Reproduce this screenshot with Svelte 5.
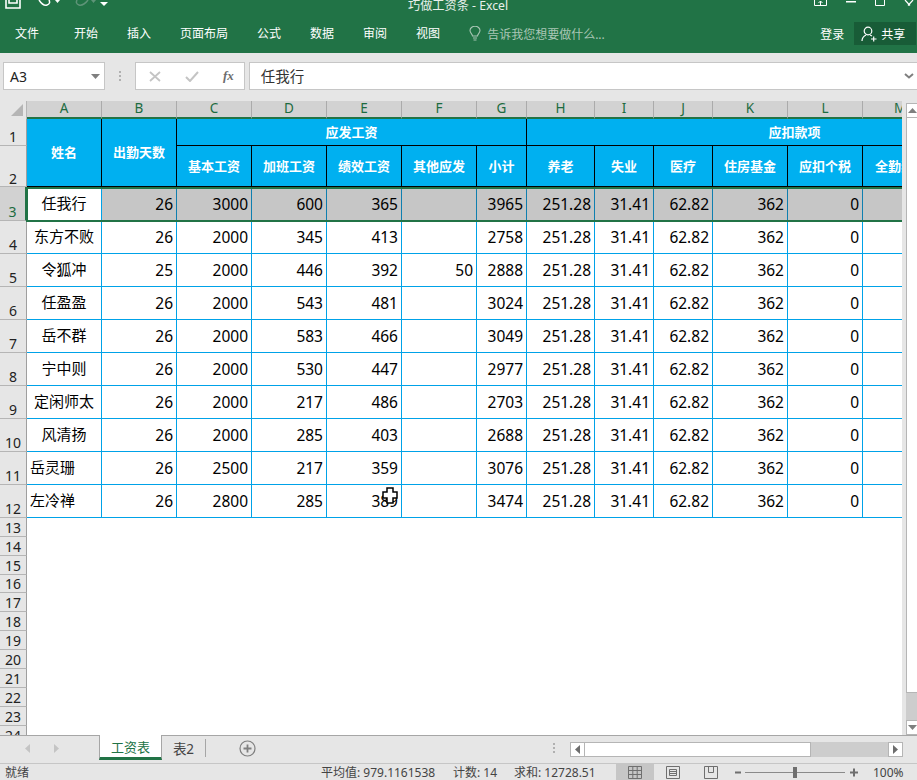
<script>
  const cols = ['A','B','C','D','E','F','G','H','I','J','K','L','M'];
  const rows = [
    ['任我行',26,3000,600,365,'',3965],
    ['东方不败',26,2000,345,413,'',2758],
    ['令狐冲',25,2000,446,392,50,2888],
    ['任盈盈',26,2000,543,481,'',3024],
    ['岳不群',26,2000,583,466,'',3049],
    ['宁中则',26,2000,530,447,'',2977],
    ['定闲师太',26,2000,217,486,'',2703],
    ['风清扬',26,2000,285,403,'',2688],
    ['岳灵珊',26,2500,217,359,'',3076],
    ['左冷禅',26,2800,285,389,'',3474]
  ];
  const deduct = ['251.28','31.41','62.82',362,0];
  const tabs = ['开始','插入','页面布局','公式','数据','审阅','视图'];
  const sub = ['基本工资','加班工资','绩效工资','其他应发','小计','养老','失业','医疗','住房基金','应扣个税','全勤奖'];
  const blank = Array.from({length: 12}, (_, i) => i + 13);
</script>

<div class="app">
  <header class="title">
    <div class="qat">
      <svg width="16" height="9" viewBox="0 0 16 9"><path d="M1 0v8h14V0M4 0v3h8V0" fill="none" stroke="#fff" stroke-width="1.6"/></svg>
      <svg class="undo" width="22" height="9" viewBox="0 0 22 9"><path d="M1 0c2 3 5 6 8 5s3-3 2-5" fill="none" stroke="#fff" stroke-width="1.5"/><path d="M17 0h5l-2.500 3z" fill="#fff"/></svg>
      <svg class="redo" width="24" height="9" viewBox="0 0 24 9"><path d="M15 0c-2 3-6 6-9 5S3 2 4 0" fill="none" stroke="#5e9478" stroke-width="1.500"/><path d="M18 0h5l-2.500 3z" fill="#5e9478"/></svg>
      <svg class="more" width="8" height="6" viewBox="0 0 8 6"><path d="M1 0h6M0 2h8l-4 4z" fill="#fff" stroke="none"/></svg>
    </div>
    <div class="doc">巧做工资条 - Excel</div>
    <div class="win">
      <svg width="13" height="7" viewBox="0 0 13 7"><path d="M.5 0v5.500h12V0M6.500 5V1M4.500 3l2-2 2 2" fill="none" stroke="#fff"/></svg>
      <svg width="10" height="4" viewBox="0 0 10 4"><rect y="1" width="10" height="1.500" fill="#fff"/></svg>
      <svg width="10" height="6" viewBox="0 0 10 6"><path d="M.5 0v5.500h9V0" fill="none" stroke="#fff"/></svg>
      <svg width="10" height="6" viewBox="0 0 10 6"><path d="M1 0l5 5.500M9 0L4 5.500" fill="none" stroke="#fff" stroke-width="1.200"/></svg>
    </div>
  </header>

  <nav class="ribbon">
    <span class="file">文件</span>
    {#each tabs as t}<span class="tab">{t}</span>{/each}
    <span class="tell">
      <svg width="12" height="15" viewBox="0 0 12 15"><path d="M3.500 10c0-2-2.500-3-2.500-5.500a5 4.300 0 0 1 10 0C11 7 8.500 8 8.500 10zM4 12h4M4.500 14h3" fill="none" stroke="#a9c6b5" stroke-width="1.100"/></svg>
      告诉我您想要做什么...
    </span>
    <span class="login">登录</span>
    <span class="share">
      <svg width="16" height="16" viewBox="0 0 16 16"><circle cx="7" cy="5" r="3.800" fill="none" stroke="#fff" stroke-width="1.200"/><path d="M1 15c0-3 2-5 4-6M9 9l2 1M10 13h5.500M12.700 10.500v5" fill="none" stroke="#fff" stroke-width="1.200"/></svg>
      共享
    </span>
  </nav>

  <section class="formula">
    <div class="namebox">A3<svg width="9" height="5" viewBox="0 0 9 5"><path d="M0 0h9L4.500 5z" fill="#7f7f7f"/></svg></div>
    <div class="dots"><i></i><i></i><i></i></div>
    <div class="fx">
      <svg width="12" height="11" viewBox="0 0 12 11"><path d="M1 1l10 9M11 1L1 10" stroke="#c4c4c4" stroke-width="1.800" fill="none"/></svg>
      <svg width="14" height="11" viewBox="0 0 14 11"><path d="M1 6l4 4 8-9" stroke="#c4c4c4" stroke-width="2" fill="none"/></svg>
      <span class="fxt">fx</span>
    </div>
    <div class="input"><span class="ftext">任我行</span><svg width="10" height="6" viewBox="0 0 10 6"><path d="M1 1l4 3.500L9 1" stroke="#7f7f7f" stroke-width="2" fill="none"/></svg></div>
  </section>

  <main class="work">
    <div class="viewport">
      <div class="grid">
        <div class="corner"><svg width="12" height="12" viewBox="0 0 12 12"><path d="M12 0v12H0z" fill="#b5b5b5"/></svg></div>
        {#each cols as c}<div class="ch">{c}</div>{/each}
        <div class="ch"></div>

        <div class="rh">1</div>
        <div class="hd name">姓名</div>
        <div class="hd days">出勤天数</div>
        <div class="hd pay">应发工资</div>
        <div class="hd ded">应扣款项</div>

        <div class="rh r2">2</div>
        {#each sub as s, i}<div class="hd" class:wide={i === 10}>{s}</div>{/each}

        {#each rows as r, i}
          <div class="rh" class:on={i === 0}>{i + 3}</div>
          <div class="c name-cell" class:sel-a={i === 0} class:left={i >= 8}>{r[0]}{#if i === 0}<div class="selection"></div>{/if}</div>
          {#each r.slice(1) as v, j}
            <div class="c" class:sel={i === 0}>{v}{#if i === 9 && j === 3}<svg class="cursor" width="16" height="17" viewBox="0 0 16 17"><path d="M5 1h6v4h4v6h-4v5H5v-5H1V5h4z" fill="#fff" stroke="#000" stroke-width="1.500"/></svg>{/if}</div>
          {/each}
          {#each deduct as v}<div class="c" class:sel={i === 0}>{v}</div>{/each}
          <div class="c" class:sel={i === 0}></div>
          <div class="c nb" class:sel={i === 0}></div>
        {/each}

        {#each blank as n}<div class="rh plain">{n}</div>{/each}
      </div>
    </div>
    <aside class="vscroll">
      <div class="sbtn"><svg width="9" height="5" viewBox="0 0 9 5"><path d="M0 5h9L4.500 0z" fill="#7f7f7f"/></svg></div>
      <div class="vthumb"></div>
      <div class="vtrack"></div>
      <div class="sbtn"><svg width="9" height="5" viewBox="0 0 9 5"><path d="M0 0h9L4.500 5z" fill="#7f7f7f"/></svg></div>
    </aside>
  </main>

  <section class="sheets">
    <div class="nav">
      <svg width="5" height="9" viewBox="0 0 5 9"><path d="M5 0v9L0 4.500z" fill="#c4c4c4"/></svg>
      <svg width="5" height="9" viewBox="0 0 5 9"><path d="M0 0v9l5-4.500z" fill="#c4c4c4"/></svg>
    </div>
    <div class="active">工资表</div>
    <div class="sheet2">表2</div>
    <div class="plus"><svg width="17" height="17" viewBox="0 0 17 17"><circle cx="8.500" cy="8.500" r="7.500" fill="none" stroke="#7f7f7f" stroke-width="1.200"/><path d="M8.500 4.500v8M4.500 8.500h8" stroke="#7f7f7f" stroke-width="1.800"/></svg></div>
    <div class="dots small"><i></i><i></i><i></i></div>
    <div class="hscroll">
      <div class="hbtn"><svg width="5" height="9" viewBox="0 0 5 9"><path d="M5 0v9L0 4.500z" fill="#6d6d6d"/></svg></div>
      <div class="hthumb"></div>
      <div class="htrack"></div>
      <div class="hbtn"><svg width="5" height="9" viewBox="0 0 5 9"><path d="M0 0v9l5-4.500z" fill="#6d6d6d"/></svg></div>
    </div>
  </section>

  <footer class="status">
    <span class="ready">就绪</span>
    <span class="avg">平均值: 979.1161538</span>
    <span class="count">计数: 14</span>
    <span class="sum">求和: 12728.51</span>
    <span class="view current"><svg width="14" height="13" viewBox="0 0 14 13"><path d="M.5.500h13v12H.5zM.5 4.500h13M.5 8.500h13M4.800.500v12M9.200.500v12" fill="none" stroke="#6f6f6f"/></svg></span>
    <span class="view"><svg width="14" height="13" viewBox="0 0 14 13"><path d="M.5.500h13v12H.5zM3.500 3.500h7v6h-7zM3.500 5.500h7M3.500 7.500h7" fill="none" stroke="#6f6f6f"/></svg></span>
    <span class="view"><svg width="14" height="13" viewBox="0 0 14 13"><path d="M.5.500h13v12H.5zM4.500.500v6h5v-6" fill="none" stroke="#6f6f6f"/></svg></span>
    <span class="zoom">
      <svg width="115" height="13" viewBox="0 0 115 13"><path d="M10 6.500h100" stroke="#8a8a8a" stroke-width="1"/><path d="M0 6.500h6" stroke="#6f6f6f" stroke-width="2"/><rect x="58" y="1" width="4" height="11" fill="#6f6f6f"/></svg>
      <svg width="8" height="9" viewBox="0 0 8 9"><path d="M0 4.500h8M4 .500v8" stroke="#6f6f6f" stroke-width="2"/></svg>
    </span>
    <span class="pct">100%</span>
  </footer>
</div>

<style>
  :global(body) { margin: 0; }
  .app {
    width: 917px; height: 780px; overflow: hidden; display: flex; flex-direction: column;
    font-family: "Noto Sans", "Noto Sans CJK SC", sans-serif; background: #e6e6e6;
  }
  svg { display: block; flex: none; }

  .title {
    height: 15px; flex: none; background: #217346; color: #e8f0eb; display: flex; overflow: hidden;
  }
  .qat { display: flex; align-items: flex-start; padding-left: 5px; width: 300px; flex: none; box-sizing: border-box; }
  .undo { margin-left: 17px; }
  .redo { margin-left: 13px; }
  .more { margin-left: 3px; }
  .doc { width: 200px; margin-left: 108px; font-size: 12.200px; line-height: 12px; height: 13px; white-space: nowrap; flex: none; }
  .win { flex: 1; display: flex; justify-content: flex-end; gap: 19px; padding: 0 3px 0 0; align-items: flex-start; }

  .ribbon {
    height: 38px; flex: none; background: #217346; color: #fff; font-size: 12px; display: flex;
    align-items: center; padding: 0 0 1px 15px; box-sizing: border-box; white-space: nowrap;
  }
  .file { margin-right: 34px; line-height: 24px; }
  .tab { margin-right: 29px; line-height: 24px; position: relative; left: 1px; }
  .tell { display: flex; align-items: center; gap: 6px; color: #a9c6b5; width: 352px; flex: none; margin-left: 1px; }
  .login { width: 34px; flex: none; margin-left: -1px; }
  .share {
    width: 62px; height: 23px; background: #185c37; display: flex; align-items: center; gap: 4px;
    padding-left: 7px; box-sizing: border-box; flex: none;
  }

  .formula {
    height: 48px; flex: none; display: flex; align-items: center; padding: 0 0 2px 3px; box-sizing: border-box;
    background: #e6e6e6; font-size: 14px; color: #222;
  }
  .namebox, .fx, .input { height: 28px; background: #fff; border: 1px solid #c6c6c6; box-sizing: border-box; display: flex; align-items: center; }
  .namebox { width: 102px; padding: 0 4px 0 6px; justify-content: space-between; font-size: 14px; }
  .dots { width: 30px; display: flex; flex-direction: column; align-items: center; justify-content: center; gap: 2px; }
  .dots i { width: 2px; height: 2px; background: #b0b0b0; display: block; }
  .fx { width: 110px; padding: 0 10px 0 13px; justify-content: space-between; }
  .fxt { font: italic bold 13px "Liberation Serif", serif; color: #6d6d6d; }
  .input {
    width: 669px; margin-left: 4px; padding: 0 3px 0 11px; justify-content: space-between; font-size: 14.500px; color: #333;
    border-right: 0;
  }
  .ftext { margin-top: -2px; }

  .work { height: 635px; flex: none; display: flex; background: #e6e6e6; border-bottom: 1px solid #a6a6a6; box-sizing: border-box; }
  .viewport { width: 902px; height: 634px; overflow: hidden; background: #fff; flex: none; }
  .grid {
    display: grid; width: 1090px; color: #111; font-size: 15.500px;
    grid-template-columns: 27px 75px 75px 75px 75px 75px 75px 50px 68px 59px 59px 75px 75px 75px 125px;
    grid-template-rows: 18px 27px 41px 34px repeat(9, 33px) 19px 19px 19px 18px 19px 19px 19px 19px 19px 19px 19px 19px;
  }
  .corner { background: #e6e6e6; display: flex; align-items: flex-end; justify-content: flex-end; padding: 0 3px 3px 0; border-right: 1px solid #b5b5b5; box-sizing: border-box; }
  .ch {
    background: #d2d2d2; color: #1c6b40; border-right: 1px solid #ababab; border-bottom: 2px solid #217346; box-sizing: border-box;
    font-size: 13.500px; display: flex; justify-content: center; align-items: center; line-height: 1;
  }
  .rh {
    grid-column: 1; background: #e6e6e6; color: #222; border-right: 1px solid #9f9f9f; border-bottom: 1px solid #b5b5b5;
    box-sizing: border-box; font-size: 14px; display: flex; justify-content: center; align-items: flex-end; line-height: 17px;
  }
  .rh.on { background: #d2d2d2; color: #1c6b40; border-right: 2px solid #217346; }
  .rh.r2 { line-height: 15px; }
  .rh.plain { line-height: 16px; }
  .hd {
    background: #00b0f0; color: #fff; font-weight: 700; font-size: 13px; display: flex; align-items: center; justify-content: center;
    border-right: 1px solid #000; border-bottom: 1px solid #000; box-sizing: border-box; overflow: hidden; white-space: nowrap; padding-bottom: 2px;
  }
  .hd.name { grid-row: 2 / span 2; grid-column: 2; }
  .hd.days { grid-row: 2 / span 2; grid-column: 3; }
  .hd.pay { grid-column: 4 / span 5; }
  .hd.ded { grid-column: 9 / span 7; }
  .hd.wide { grid-column: 14 / span 2; justify-content: flex-start; padding-left: 12px; }
  .c {
    background: #fff; border-right: 1px solid #00a2e8; border-bottom: 1px solid #00a2e8; box-sizing: border-box;
    display: flex; align-items: center; justify-content: flex-end; padding-right: 3px; white-space: nowrap; position: relative; color: #000;
  }
  .name-cell { justify-content: center; padding: 0 0 3px; font-size: 15px; }
  .left { justify-content: flex-start; padding-left: 3px; }
  .sel { background: #c6c6c6; border-right-color: #0f7fb0; border-bottom-color: #fff; border-top: 1px solid #fff; }
  .sel-a { border-bottom-color: #fff; border-top: 1px solid #fff; }
  .selection {
    position: absolute; left: -1px; top: -1px; width: 1070px; height: 35px; box-sizing: border-box;
    border-top: 2px solid #217346; border-bottom: 2px solid #217346; border-left: 2px solid #217346;
    pointer-events: none; z-index: 2;
  }
  .cursor { position: absolute; right: 3px; top: 2px; }

  .vscroll { width: 15px; padding-left: 4px; box-sizing: border-box; display: flex; flex-direction: column; height: 634px; padding-top: 2px; }
  .sbtn { height: 15px; flex: none; background: #fff; border: 1px solid #b5b5b5; border-right: 0; box-sizing: border-box; display: flex; align-items: center; justify-content: center; }
  .vthumb { height: 575px; flex: none; background: #fff; border: 1px solid #b5b5b5; border-right: 0; border-top: 0; box-sizing: border-box; }
  .vtrack { flex: 1; background: #cdcdcd; }

  .sheets { height: 28px; flex: none; display: flex; align-items: flex-start; font-size: 13px; color: #444; background: #e6e6e6; border-bottom: 1px solid #c6c6c6; box-sizing: border-box; }
  .nav { width: 99px; height: 24px; display: flex; align-items: center; gap: 24px; padding-left: 25px; box-sizing: border-box; flex: none; }
  .active {
    width: 63px; background: #fff; color: #217346; border: 1px solid #a6a6a6; border-top: 0; border-bottom: 3px solid #217346;
    box-sizing: border-box; display: flex; align-items: center; justify-content: center; flex: none; margin-top: -1px; height: 25px;
  }
  .sheet2 { width: 44px; margin-top: 3px; height: 18px; display: flex; align-items: center; justify-content: center; border-right: 1px solid #a6a6a6; box-sizing: border-box; flex: none; font-size: 13.500px; }
  .plus { width: 84px; height: 24px; flex: none; display: flex; align-items: center; padding: 0 0 0 33px; box-sizing: border-box; }
  .dots.small { width: 30px; flex: none; box-sizing: border-box; margin-left: auto; margin-right: 1px; height: 24px; }
  .hscroll { width: 333px; height: 15px; margin-top: 6px; margin-right: 14px; display: flex; flex: none; }
  .hbtn { width: 15px; height: 15px; background: #fff; border: 1px solid #b5b5b5; box-sizing: border-box; display: flex; align-items: center; justify-content: center; flex: none; }
  .hthumb { width: 226px; background: #fff; border: 1px solid #b5b5b5; border-left: 0; box-sizing: border-box; flex: none; }
  .htrack { flex: 1; background: #cdcdcd; }

  .status { height: 16px; flex: none; display: flex; align-items: center; font-size: 12px; color: #444; white-space: nowrap; }
  .ready { margin-left: 5px; width: 316px; flex: none; }
  .avg { width: 132px; flex: none; }
  .count { width: 61px; flex: none; }
  .sum { width: 102px; flex: none; }
  .view { width: 38px; height: 16px; display: flex; align-items: center; justify-content: center; flex: none; }
  .view.current { background: #c6c6c6; }
  .zoom { display: flex; align-items: center; margin-left: 5px; flex: none; width: 123px; }
  .pct { flex: none; margin-left: 15px; }
</style>
